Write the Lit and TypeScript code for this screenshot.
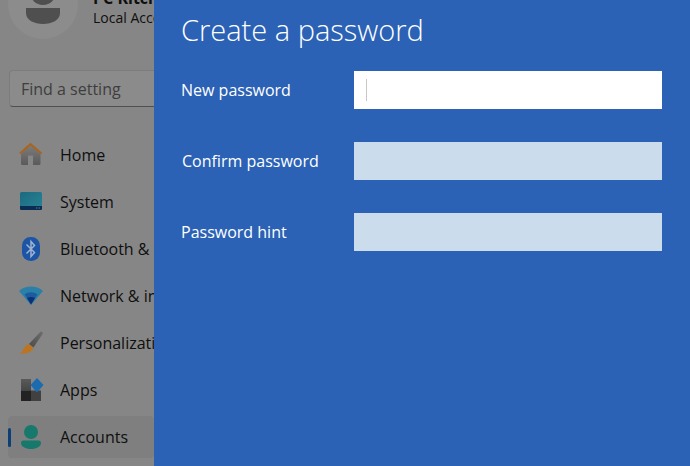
import { LitElement, html, css, svg } from 'lit';
import { customElement } from 'lit/decorators.js';

const icons = {
  home: svg`<defs><linearGradient id="homeWall" x1="0" y1="0" x2="0" y2="1"><stop offset="0" stop-color="#7d7d7d"/><stop offset="1" stop-color="#5a5a5a"/></linearGradient></defs>
    <path d="M2 11 L11.5 2 L21.5 11 V20.5 a1.5 1.5 0 0 1 -1.5 1.5 H14 V12.5 H9 V22 H3.5 A1.5 1.5 0 0 1 2 20.5 Z" fill="url(#homeWall)"/>
    <path d="M1 10.5 L11.5 1.2 L22.5 10.5" fill="none" stroke="#a9641f" stroke-width="2.2"/>`,
  system: svg`<defs><linearGradient id="sysScreen" x1="0" y1="0" x2="1" y2="1"><stop offset="0" stop-color="#1a6a80"/><stop offset="1" stop-color="#2a8496"/></linearGradient></defs>
    <rect x="1" y="2" width="22" height="18" rx="1.5" fill="url(#sysScreen)"/>
    <path d="M1 16 H23 V18.5 a1.5 1.5 0 0 1 -1.5 1.5 H2.5 A1.5 1.5 0 0 1 1 18.5 Z" fill="#0b2c55"/>
    <path d="M17 18 H18.4 M19.6 18 H21" stroke="#6f93a8" stroke-width="0.8"/>`,
  bluetooth: svg`<rect x="3" y="0" width="18" height="24" rx="8.5" fill="#1c55a6"/>
    <path d="M7.5 7.5 L15.5 15.5 L12 19.5 V4.5 L15.5 8.5 L7.5 16.5" fill="none" stroke="#9fb3cf" stroke-width="1.5"/>`,
  network: svg`<path d="M1 7 C7 2 17 2 23 7 L12 20 Z" fill="#2a80a8" stroke="#2a80a8" stroke-width="1.5" stroke-linejoin="round"/>
    <path d="M5.5 10.5 C9.5 7.5 14.5 7.5 18.5 10.5 L12 20 Z" fill="#1c5c9e"/>
    <path d="M8 14 C10.5 12.5 13.5 12.5 16 14 L12 20.5 Z" fill="#0c2f78"/>`,
  brush: svg`<defs><linearGradient id="brushHandle" x1="1" y1="0" x2="0" y2="1"><stop offset="0" stop-color="#6e6e6e"/><stop offset="1" stop-color="#4a4a4a"/></linearGradient></defs>
    <path d="M21.5 .8 a1.6 1.6 0 0 1 2.2 2 L14.5 16.5 L10 13 Z" fill="url(#brushHandle)"/>
    <path d="M9.5 13 L14.5 17 C13 21 7 23.5 0.5 22.5 C4.5 21 4.5 15 9.5 13 Z" fill="#bd7420"/>`,
  apps: svg`<defs><linearGradient id="appsTile" x1="0" y1="0" x2="0" y2="1"><stop offset="0" stop-color="#5a5a5a"/><stop offset="1" stop-color="#464646"/></linearGradient></defs>
    <rect x="2" y="1" width="10" height="11.5" fill="url(#appsTile)"/>
    <rect x="2" y="12.5" width="10" height="10.5" fill="#222"/>
    <rect x="12" y="12.5" width="10" height="10.5" fill="#414141"/>
    <path d="M18 0 L24.5 7 L18 14.5 L11.5 7 Z" fill="#1b6bb0"/>`,
  account: svg`<circle cx="12" cy="7" r="7" fill="#17786c"/>
    <path d="M4 15.5 H20 a2.5 2.5 0 0 1 2 2.5 C22 21.5 17.5 24 12 24 C6.5 24 2 21.5 2 18 a2.5 2.5 0 0 1 2 -2.5 Z" fill="#17786c"/>`,
};

const navItems = [
  { label: 'Home', icon: icons.home },
  { label: 'System', icon: icons.system },
  { label: 'Bluetooth & devices', icon: icons.bluetooth },
  { label: 'Network & internet', icon: icons.network },
  { label: 'Personalization', icon: icons.brush },
  { label: 'Apps', icon: icons.apps },
  { label: 'Accounts', icon: icons.account, active: true },
];

const fields = [
  { label: 'New password', focused: true },
  { label: 'Confirm password', nudge: true },
  { label: 'Password hint' },
];

@customElement('app-root')
export class AppRoot extends LitElement {
  static styles = css`
    :host {
      display: block;
      width: 690px;
      height: 466px;
      overflow: hidden;
      font-family: 'Open Sans', 'Noto Sans', sans-serif;
    }

    .page {
      display: grid;
      grid-template-columns: 154px 1fr;
      height: 466px;
    }

    /* Dimmed settings window behind the dialog */
    .sidebar {
      background: #868686;
      color: #0f0f0f;
      overflow: hidden;
      white-space: nowrap;
      font-size: 16px;
    }
    .profile {
      display: flex;
      align-items: flex-start;
      gap: 15px;
      margin: -31px 0 0 8px;
    }
    .avatar {
      flex: none;
      width: 70px;
      height: 70px;
      border-radius: 50%;
      background: #8c8c8c;
    }
    .avatar svg {
      display: block;
    }
    .who {
      display: flex;
      flex-direction: column;
      padding-top: 20px;
      font-size: 14px;
      line-height: 19px;
    }
    .who b {
      font-size: 16px;
      font-weight: 700;
    }
    .search {
      box-sizing: border-box;
      height: 37px;
      width: 200px;
      margin: 31px 0 0 9px;
      padding-left: 11px;
      display: flex;
      align-items: center;
      border: 1px solid #7c7c7c;
      border-bottom-color: #505050;
      border-radius: 4px;
      background: #8b8b8b;
      color: #3e3e3e;
      font-size: 16px;
    }
    nav {
      display: flex;
      flex-direction: column;
      gap: 5px;
      margin: 27px 0 0 8px;
    }
    .item {
      position: relative;
      display: flex;
      align-items: center;
      gap: 17px;
      height: 42px;
      padding-left: 11px;
      border-radius: 4px;
    }
    .item svg {
      flex: none;
      overflow: visible;
    }
    .item.active {
      background: #7f7f7f;
    }
    .item.active::before {
      content: '';
      position: absolute;
      left: 0;
      top: 12px;
      width: 3px;
      height: 19px;
      border-radius: 2px;
      background: #0b3f78;
    }

    /* Create a password panel */
    .panel {
      background: #2b62b5;
      color: #fff;
      padding: 0 28px 0 27px;
    }
    h1 {
      margin: 0;
      height: 71px;
      padding-top: 9px;
      box-sizing: border-box;
      font-size: 29px;
      line-height: 42px;
      font-weight: 300;
    }
    .fields {
      display: flex;
      flex-direction: column;
      gap: 33px;
    }
    .row {
      display: grid;
      grid-template-columns: 173px 308px;
      align-items: center;
      font-size: 16px;
    }
    .row .nudge {
      padding-left: 1px;
    }
    .box {
      height: 38px;
      background: #cbdded;
      display: flex;
      align-items: center;
    }
    .box.focused {
      background: #fff;
    }
    .box.focused::before {
      content: '';
      width: 1px;
      height: 22px;
      margin-left: 12px;
      background: #c8c8c8;
    }
  `;

  render() {
    return html`
      <div class="page">
        <aside class="sidebar">
          <div class="profile">
            <div class="avatar">
              <svg width="70" height="70" viewBox="0 0 70 70">
                <circle cx="35" cy="23" r="13" fill="#4f4f4f"/>
                <path d="M18 39 H52 V44 C52 51 44 55 35 55 C26 55 18 51 18 44 Z" fill="#4f4f4f"/>
              </svg>
            </div>
            <div class="who">
              <b>PC Kitchen</b>
              <span>Local Account</span>
            </div>
          </div>
          <div class="search">Find a setting</div>
          <nav>
            ${navItems.map(
              (item) => html`
                <div class="item ${item.active ? 'active' : ''}">
                  <svg width="24" height="24" viewBox="0 0 24 24">${item.icon}</svg>
                  <span>${item.label}</span>
                </div>
              `
            )}
          </nav>
        </aside>
        <main class="panel">
          <h1>Create a password</h1>
          <div class="fields">
            ${fields.map(
              (field) => html`
                <div class="row">
                  <span class="${field.nudge ? 'nudge' : ''}">${field.label}</span>
                  <div class="box ${field.focused ? 'focused' : ''}"></div>
                </div>
              `
            )}
          </div>
        </main>
      </div>
    `;
  }
}
